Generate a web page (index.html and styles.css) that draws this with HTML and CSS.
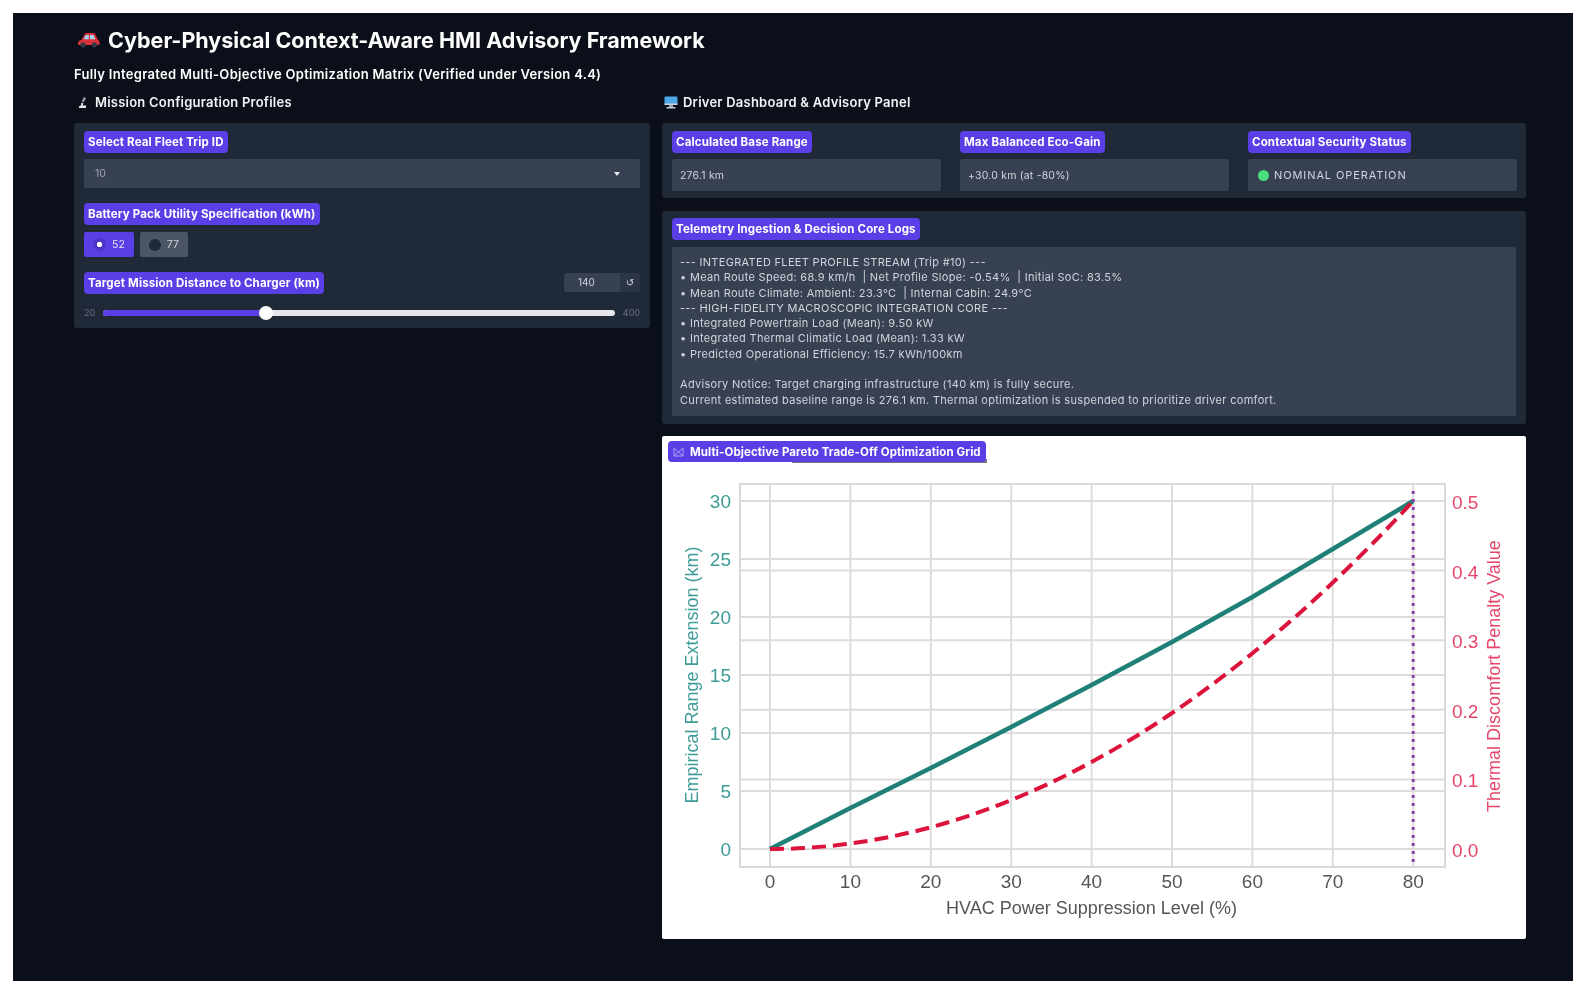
FILE: index.html
```html
<!DOCTYPE html>
<html lang="en">
<head>
  <meta charset="UTF-8">
  <title>Cyber-Physical Context-Aware HMI Advisory Framework</title>
  <link rel="stylesheet" href="styles.css">
</head>
<body>
  <div class="app">
    <h1 class="app-title">
      <svg class="car-icon" width="23" height="16" viewBox="0 0 23 16">
        <path d="M1 11.5c0-2.3 1.500-3.300 3.500-3.800L7.500 2.500C8 1.500 9 1 10 1h6c1 0 1.800.5 2.300 1.500l2.500 5c1.300.6 1.700 2 1.700 4v1.500H1z" fill="#d8323c"/>
        <path d="M8.800 3h3v4.200H6.600zM13 3h3.500l1.800 4.200H13z" fill="#9fd4ee"/>
        <circle cx="6" cy="12.800" r="2.600" fill="#333a44"/>
        <circle cx="17.500" cy="12.800" r="2.600" fill="#333a44"/>
      </svg>
      Cyber-Physical Context-Aware HMI Advisory Framework
    </h1>
    <div class="app-subtitle">Fully Integrated Multi-Objective Optimization Matrix (Verified under Version 4.4)</div>

    <div class="columns">
      <div class="col-left">
        <h2 class="section-title">
          <svg class="section-icon-left" width="11" height="13" viewBox="0 0 11 13">
            <path d="M7 1l2 1.200-2.500 4-1.800-1z" fill="#9ca3af"/>
            <path d="M4.500 6.500l2 1-1 2h3.500v2.500H2v-1.500l2-1.200z" fill="#e5e7eb"/>
          </svg>
          Mission Configuration Profiles
        </h2>
        <div class="panel panel-config">
          <div class="field">
            <span class="tag">Select Real Fleet Trip ID</span>
            <div class="select-box">
              <span>10</span>
              <span class="caret"></span>
            </div>
          </div>
          <div class="field">
            <span class="tag">Battery Pack Utility Specification (kWh)</span>
            <div class="radio-row">
              <div class="radio radio-on"><span class="radio-dot"></span>52</div>
              <div class="radio"><span class="radio-dot"></span>77</div>
            </div>
          </div>
          <div class="field">
            <div class="slider-head">
              <span class="tag">Target Mission Distance to Charger (km)</span>
              <div class="number-box">
                <span class="number-value">140</span>
                <span class="number-reset">↺</span>
              </div>
            </div>
            <div class="slider-row">
              <span class="slider-end">20</span>
              <div class="slider-track">
                <div class="slider-fill"></div>
                <div class="slider-thumb"></div>
              </div>
              <span class="slider-end">400</span>
            </div>
          </div>
        </div>
      </div>

      <div class="col-right">
        <h2 class="section-title section-title-right">
          <svg width="14" height="13" viewBox="0 0 14 13">
            <rect x="0.500" y="0.500" width="13" height="8.500" rx="1" fill="#4fa8e8"/>
            <rect x="0.500" y="7.500" width="13" height="1.500" fill="#c9d1d9"/>
            <rect x="5" y="9" width="4" height="2" fill="#9ca3af"/>
            <rect x="2.500" y="11" width="9" height="1.500" fill="#c9d1d9"/>
          </svg>
          Driver Dashboard &amp; Advisory Panel
        </h2>

        <div class="panel panel-stats">
          <div class="field">
            <span class="tag">Calculated Base Range</span>
            <div class="value-box">276.1 km</div>
          </div>
          <div class="field">
            <span class="tag">Max Balanced Eco-Gain</span>
            <div class="value-box">+30.0 km (at -80%)</div>
          </div>
          <div class="field">
            <span class="tag">Contextual Security Status</span>
            <div class="value-box value-status"><span class="status-dot"></span>NOMINAL OPERATION</div>
          </div>
        </div>

        <div class="panel panel-logs field">
          <span class="tag">Telemetry Ingestion &amp; Decision Core Logs</span>
<pre class="log-box">--- INTEGRATED FLEET PROFILE STREAM (Trip #10) ---
• Mean Route Speed: 68.9 km/h  | Net Profile Slope: -0.54%  | Initial SoC: 83.5%
• Mean Route Climate: Ambient: 23.3°C  | Internal Cabin: 24.9°C
--- HIGH-FIDELITY MACROSCOPIC INTEGRATION CORE ---
• Integrated Powertrain Load (Mean): 9.50 kW
• Integrated Thermal Climatic Load (Mean): 1.33 kW
• Predicted Operational Efficiency: 15.7 kWh/100km

Advisory Notice: Target charging infrastructure (140 km) is fully secure.
Current estimated baseline range is 276.1 km. Thermal optimization is suspended to prioritize driver comfort.</pre>
        </div>

        <div class="chart-card">
          <div class="tag-shadow"></div>
          <span class="tag chart-tag">
            <svg width="11" height="10" viewBox="0 0 11 10">
              <path d="M1 1v8h9V1M1 1l9 8M10 1L1 9" fill="none" stroke="#a9a3f0" stroke-width="1"/>
            </svg>
            Multi-Objective Pareto Trade-Off Optimization Grid
          </span>
          <svg class="chart" width="864" height="503" viewBox="662 436 864 503">
            <g class="grid">
              <path d="M770 484V867M850.400 484V867M930.800 484V867M1011.200 484V867M1091.600 484V867M1172 484V867M1252.400 484V867M1332.800 484V867M1413.200 484V867"/>
              <path d="M740 501H1445M740 559H1445M740 617H1445M740 675H1445M740 733H1445M740 791H1445M740 849H1445"/>
              <path d="M740 570.600H1445M740 640.200H1445M740 709.800H1445M740 779.400H1445"/>
            </g>
            <rect class="plot-frame" x="740" y="484" width="705" height="383"/>

            <path class="line-range" d="M770 849L850.400 808L930.800 768L1011.200 727L1091.600 685L1172 642L1252.400 597L1332.800 549L1413.200 501"/>
            <path class="line-penalty" d="M770 849Q1091.600 849 1413.200 501"/>
            <path class="line-marker" d="M1413.200 491V867"/>

            <g class="ticks-left">
              <text x="731" y="508">30</text>
              <text x="731" y="566">25</text>
              <text x="731" y="624">20</text>
              <text x="731" y="682">15</text>
              <text x="731" y="740">10</text>
              <text x="731" y="798">5</text>
              <text x="731" y="856">0</text>
            </g>
            <g class="ticks-right">
              <text x="1452" y="509">0.5</text>
              <text x="1452" y="579">0.4</text>
              <text x="1452" y="648">0.3</text>
              <text x="1452" y="718">0.2</text>
              <text x="1452" y="787">0.1</text>
              <text x="1452" y="857">0.0</text>
            </g>
            <g class="ticks-x">
              <text x="770" y="888">0</text>
              <text x="850.400" y="888">10</text>
              <text x="930.800" y="888">20</text>
              <text x="1011.200" y="888">30</text>
              <text x="1091.600" y="888">40</text>
              <text x="1172" y="888">50</text>
              <text x="1252.400" y="888">60</text>
              <text x="1332.800" y="888">70</text>
              <text x="1413.200" y="888">80</text>
            </g>
            <text class="axis-x" x="1091.500" y="914">HVAC Power Suppression Level (%)</text>
            <text class="axis-left" transform="translate(698 675) rotate(-90)">Empirical Range Extension (km)</text>
            <text class="axis-right" transform="translate(1500 676) rotate(-90)">Thermal Discomfort Penalty Value</text>
          </svg>
        </div>
      </div>
    </div>
  </div>
</body>
</html>
```

FILE: styles.css
```css
* {
  box-sizing: border-box;
}

body {
  margin: 0;
  background-color: #ffffff;
  font-family: "Inter", "Liberation Sans", sans-serif;
}

.app {
  margin: 13px 13px 12px;
  height: 968px;
  padding: 14px 47px 0 61px;
  background-color: #0b0f19;
  color: #ffffff;
  filter: blur(0.5px);
}

.app-title {
  display: flex;
  align-items: center;
  gap: 8px;
  margin: 0 0 0 3px;
  height: 26px;
  font-size: 21.500px;
  font-weight: 700;
}

.app-subtitle {
  margin-top: 13px;
  height: 16px;
  font-size: 13px;
  font-weight: 600;
  letter-spacing: 0.300px;
  line-height: 16px;
}

.columns {
  display: flex;
  gap: 12px;
  margin-top: 12px;
}

.col-left {
  width: 576px;
}

.col-right {
  width: 864px;
}

.section-title {
  display: flex;
  align-items: center;
  gap: 7px;
  margin: 0 0 13px 3px;
  height: 16px;
  font-size: 13px;
  font-weight: 600;
  letter-spacing: 0.230px;
  color: #f3f4f6;
}

.section-title-right {
  margin-left: 2px;
  gap: 5px;
}

.panel {
  background-color: #1f2937;
  border-radius: 3px;
}

.panel-config {
  display: flex;
  flex-direction: column;
  gap: 15px;
  height: 205px;
  padding: 8px 10px;
}

.field {
  display: flex;
  flex-direction: column;
  align-items: flex-start;
}

.tag {
  display: inline-flex;
  align-items: center;
  height: 22px;
  padding: 0 4px;
  border-radius: 4px;
  background-color: #5a3fe6;
  color: #ffffff;
  font-size: 11.500px;
  font-weight: 700;
  letter-spacing: 0.150px;
  white-space: nowrap;
}

.select-box {
  display: flex;
  justify-content: space-between;
  align-items: center;
  align-self: stretch;
  height: 29px;
  margin-top: 6px;
  padding: 0 20px 0 11px;
  border-radius: 2px;
  background-color: #374151;
  color: #9ca3af;
  font-size: 10.500px;
}

.caret {
  width: 0;
  height: 0;
  border-left: 3.500px solid transparent;
  border-right: 3.500px solid transparent;
  border-top: 4px solid #e5e7eb;
}

.radio-row {
  display: flex;
  gap: 6px;
  margin-top: 7px;
}

.radio {
  display: flex;
  align-items: center;
  gap: 6px;
  height: 25px;
  padding: 0 9px;
  border-radius: 2px;
  background-color: #4b5563;
  color: #d1d5db;
  font-size: 10.500px;
}

.radio-on {
  background-color: #5a3fe6;
  color: #e5e7eb;
}

.radio-dot {
  width: 12px;
  height: 12px;
  border-radius: 50%;
  background-color: #1f2937;
}

.radio-on .radio-dot {
  width: 13px;
  height: 13px;
  background-color: #4c33c9;
  background-image: radial-gradient(circle, #ffffff 0 2.500px, transparent 3px);
}

.slider-head {
  display: flex;
  justify-content: space-between;
  align-items: flex-start;
  align-self: stretch;
}

.number-box {
  display: flex;
  height: 19px;
  width: 76px;
  margin-top: 1px;
  border-radius: 3px;
  overflow: hidden;
  background-color: #374151;
  color: #d1d5db;
  font-size: 10px;
  line-height: 19px;
}

.number-value {
  flex: 1;
  padding-left: 14px;
}

.number-reset {
  width: 20px;
  background-color: #2b3544;
  text-align: center;
  font-family: "DejaVu Sans", sans-serif;
}

.slider-row {
  display: flex;
  align-items: center;
  align-self: stretch;
  gap: 8px;
  margin-top: 13px;
}

.slider-end {
  color: #6b7280;
  font-size: 9px;
}

.slider-track {
  position: relative;
  flex: 1;
  height: 6px;
  border-radius: 3px;
  background-color: #e5e7eb;
}

.slider-fill {
  width: 163px;
  height: 100%;
  border-radius: 3px 0 0 3px;
  background-color: #5a3fe6;
}

.slider-thumb {
  position: absolute;
  left: 156px;
  top: -4px;
  width: 14px;
  height: 14px;
  border-radius: 50%;
  background-color: #ffffff;
}

.panel-stats {
  display: grid;
  grid-template-columns: repeat(3, 269px);
  gap: 19px;
  height: 75px;
  padding: 8px 10px;
}

.value-box {
  display: flex;
  align-items: center;
  align-self: stretch;
  height: 32px;
  margin-top: 6px;
  padding: 0 8px;
  border-radius: 2px;
  background-color: #374151;
  color: #d1d5db;
  font-size: 10.500px;
  letter-spacing: 0.200px;
}

.value-status {
  gap: 5px;
  padding-left: 10px;
  font-size: 11px;
  letter-spacing: 0.900px;
}

.status-dot {
  width: 11px;
  height: 11px;
  border-radius: 50%;
  background-color: #4ade80;
}

.panel-logs {
  height: 213px;
  margin-top: 13px;
  padding: 7px 10px 8px;
}

.log-box {
  align-self: stretch;
  height: 169px;
  margin: 7px 0 0;
  padding: 8px 8px;
  border-radius: 2px;
  background-color: #374151;
  color: #d1d5db;
  font-family: "Inter", "Liberation Sans", sans-serif;
  font-size: 11px;
  letter-spacing: 0.310px;
  line-height: 15.300px;
}

.chart-card {
  position: relative;
  height: 503px;
  margin-top: 12px;
  border-radius: 2px;
  background-color: #ffffff;
}

.chart-tag {
  position: absolute;
  left: 6px;
  top: 5px;
  gap: 6px;
  height: 21px;
  padding: 0 5px;
  letter-spacing: 0.100px;
}

.tag-shadow {
  position: absolute;
  left: 130px;
  top: 23px;
  width: 195px;
  height: 4px;
  background-color: #77777c;
}

.chart {
  display: block;
}

.chart text {
  font-family: "Liberation Sans", sans-serif;
}

.grid path {
  fill: none;
  stroke: #dcdcdc;
  stroke-width: 2;
}

.plot-frame {
  fill: none;
  stroke: #d9d9d9;
  stroke-width: 2;
}

.line-range {
  fill: none;
  stroke: #1f8078;
  stroke-width: 4.500;
}

.line-penalty {
  fill: none;
  stroke: #dc143c;
  stroke-width: 4;
  stroke-dasharray: 14 7;
}

.line-marker {
  fill: none;
  stroke: #8e3fa8;
  stroke-width: 3;
  stroke-dasharray: 3 5;
}

.ticks-left text {
  fill: #3d9b98;
  font-size: 19px;
  text-anchor: end;
}

.ticks-right text {
  fill: #e5466a;
  font-size: 19px;
}

.ticks-x text {
  fill: #555555;
  font-size: 19px;
  text-anchor: middle;
}

.axis-x {
  fill: #555555;
  font-size: 18px;
  text-anchor: middle;
}

.axis-left {
  fill: #3d9b98;
  font-size: 18px;
  text-anchor: middle;
}

.axis-right {
  fill: #e5466a;
  font-size: 18px;
  text-anchor: middle;
}
```
